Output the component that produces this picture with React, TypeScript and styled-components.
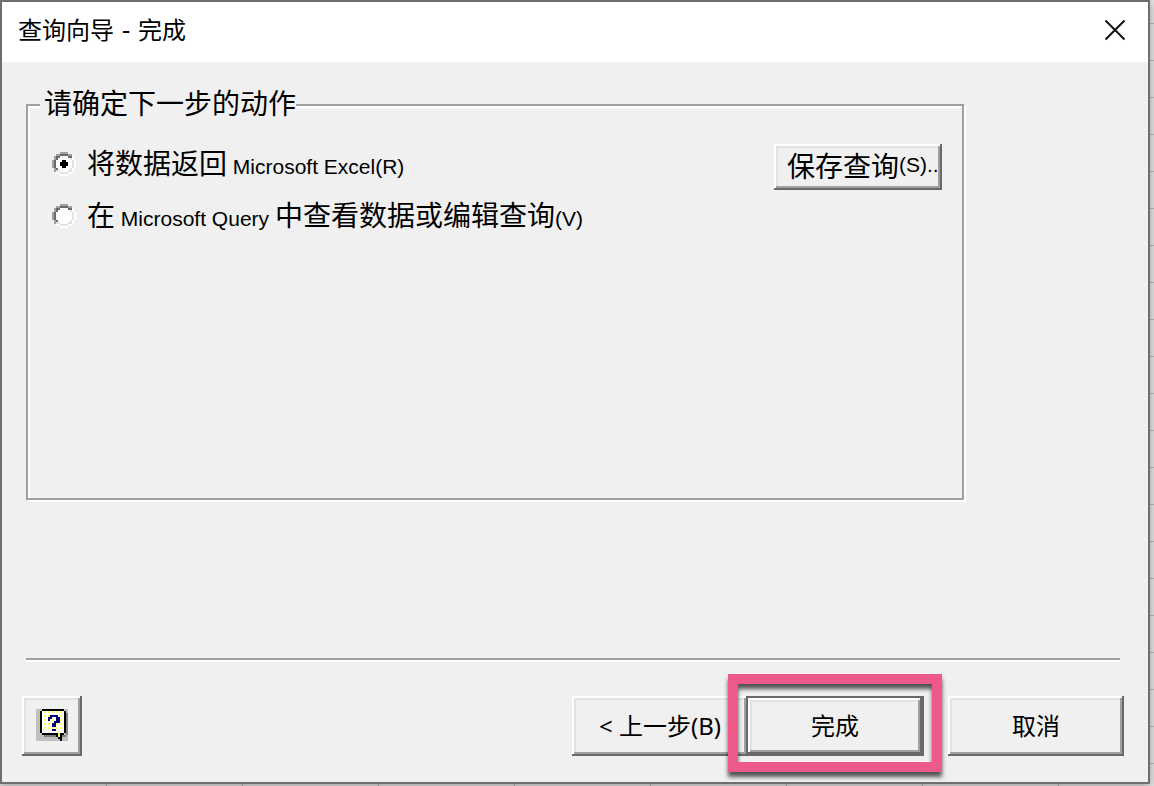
import React from "react";
import styled, { createGlobalStyle } from "styled-components";

const colors = {
  face: "#f0f0f0",
  light: "#e3e3e3",
  highlight: "#ffffff",
  shadow: "#a0a0a0",
  dark: "#696969",
  accent: "#ed5a8a",
};

const GlobalStyle = createGlobalStyle`
  *, *::before, *::after { box-sizing: border-box; }
  body {
    margin: 0;
    font-family: "Noto Sans", "Noto Sans CJK SC", sans-serif;
    font-size: 24px;
    color: #000;
  }
`;

const Sheet = styled.div`
  display: flex;
  min-height: 100vh;
  padding: 0 4px 2px 0;
  background-color: #e2e1e2;
  background-image:
    linear-gradient(#b4b4b4 1px, transparent 1px),
    linear-gradient(90deg, #b4b4b4 1px, transparent 1px);
  background-size: 100% 37px, 136px 100%;
  background-position: 0 23px, 106px 0;
  overflow: hidden;
`;

const Dialog = styled.main`
  display: flex;
  flex: 1;
  flex-direction: column;
  border: 2px solid #6e6e6e;
  background: ${colors.face};
  box-shadow: 0 2px 8px rgba(0, 0, 0, 0.3);
`;

const TitleBar = styled.header`
  display: flex;
  align-items: center;
  justify-content: space-between;
  height: 60px;
  padding: 0 22px 2px 16px;
  background: #fff;
`;

const Title = styled.h1`
  margin: 0;
  font-family: "DejaVu Sans", "Noto Sans CJK SC", sans-serif;
  font-size: 24px;
  line-height: 32px;
  font-weight: 400;
`;

const CloseButton = styled.button`
  display: flex;
  padding: 0 0 2px;
  border: 0;
  background: none;
`;

const Content = styled.form`
  display: flex;
  flex: 1;
  flex-direction: column;
  padding: 27px 0 26px;
`;

const Group = styled.fieldset`
  min-height: 411px;
  margin: 0 184px 0 24px;
  padding: 0;
  border: 2px solid ${colors.shadow};
  box-shadow: 2px 2px ${colors.highlight}, inset 2px 2px ${colors.highlight};
`;

const Legend = styled.legend`
  margin-left: 12px;
  padding: 0 0 0 4px;
  background: ${colors.face};
  font-family: "Liberation Sans", "Noto Sans CJK SC", sans-serif;
  font-size: 28px;
  line-height: 32px;
`;

const GroupBody = styled.div`
  display: flex;
  align-items: flex-start;
  justify-content: space-between;
  padding: 23px 20px 0 24px;
`;

const OptionList = styled.div`
  display: flex;
  flex-direction: column;
  gap: 20px;
  padding-top: 4px;
`;

const Option = styled.label`
  display: flex;
  align-items: center;
  gap: 11px;
  height: 32px;
  font-family: "Liberation Sans", "Noto Sans CJK SC", sans-serif;
  font-size: 28px;
  line-height: 32px;
  white-space: nowrap;
`;

const OptionText = styled.span`
  padding-top: 3px;
`;

const Latin = styled.span`
  font-size: 21px;
`;

const RadioBox = styled.span`
  display: grid;

  > * {
    grid-area: 1 / 1;
    width: 24px;
    height: 24px;
    margin: 0;
  }

  input {
    opacity: 0;
  }

  .dot {
    visibility: hidden;
  }

  input:checked + svg .dot {
    visibility: visible;
  }
`;

const PushButton = styled.button<{ $width: number }>`
  display: flex;
  align-items: center;
  justify-content: center;
  width: ${(p) => p.$width}px;
  height: 60px;
  padding: 0 0 4px;
  border: 0;
  background: ${colors.face};
  color: #000;
  font-family: inherit;
  font-size: 24px;
  white-space: pre;
  box-shadow:
    inset -2px -2px ${colors.dark},
    inset 2px 2px ${colors.highlight},
    inset -4px -4px ${colors.shadow},
    inset 4px 4px ${colors.light};
`;

const HelpButton = styled(PushButton)`
  padding: 0 0 2px;
`;

const SaveButton = styled(PushButton)`
  justify-content: flex-start;
  height: 46px;
  padding: 0 4px 4px 13px;
  font-family: "Liberation Sans", "Noto Sans CJK SC", sans-serif;
  font-size: 28px;
`;

const DefaultButton = styled(PushButton)`
  box-shadow:
    inset 0 0 0 2px ${colors.dark},
    inset -4px -4px ${colors.dark},
    inset 4px 4px ${colors.highlight},
    inset -6px -6px ${colors.shadow},
    inset 6px 6px ${colors.light};
`;

const Divider = styled.hr`
  height: 4px;
  margin: auto 28px 34px 24px;
  border: 0;
  border-top: 2px solid ${colors.shadow};
  background: ${colors.highlight};
`;

const Footer = styled.footer`
  display: flex;
  justify-content: space-between;
  padding: 0 24px 0 20px;
`;

const Actions = styled.div`
  display: flex;
`;

const Highlighted = styled.div`
  position: relative;
  margin: 0 24px 0 -2px;
`;

const HighlightFrame = styled.span`
  position: absolute;
  inset: -22px -18px -16px;
  border: 10px solid ${colors.accent};
  filter: drop-shadow(0 5px 2px rgba(0, 0, 0, 0.65));
  pointer-events: none;
`;

type Run = [x: number, y: number, length: number, height?: number];

function Pixels({ runs, fill, className }: { runs: Run[]; fill: string; className?: string }) {
  return (
    <g fill={fill} className={className}>
      {runs.map(([x, y, w, h = 1]) => (
        <rect key={`${x}-${y}`} x={x} y={y} width={w} height={h} />
      ))}
    </g>
  );
}

function RadioFace() {
  return (
    <svg viewBox="0 0 12 12" shapeRendering="crispEdges" aria-hidden="true">
      <Pixels fill="#fff" runs={[[4, 2, 4, 8], [2, 4, 2, 4], [8, 4, 2, 4], [3, 3, 1, 6], [8, 3, 1, 6]]} />
      <Pixels
        fill={colors.shadow}
        runs={[[4, 0, 4], [2, 1, 2], [8, 1, 2], [1, 2, 1, 2], [0, 4, 1, 4], [1, 8, 1, 2]]}
      />
      <Pixels fill={colors.dark} runs={[[4, 1, 4], [2, 2, 2], [8, 2, 2], [2, 3, 1], [1, 4, 1, 4], [2, 8, 1]]} />
      <Pixels fill={colors.light} runs={[[9, 3, 1], [10, 4, 1, 4], [9, 8, 1], [8, 9, 2], [2, 9, 2], [4, 10, 4]]} />
      <Pixels fill="#fff" runs={[[10, 2, 1, 2], [11, 4, 1, 4], [10, 8, 1, 2], [8, 10, 2], [2, 10, 2], [4, 11, 4]]} />
      <Pixels className="dot" fill="#000" runs={[[5, 4, 2, 4], [4, 5, 4, 2]]} />
    </svg>
  );
}

const yellowDots: Run[] = [2, 4, 6, 8, 10].flatMap((y) =>
  [4, 6, 8, 10, 12].map((x): Run => [x, y - 1, 1]),
);

function HelpIcon() {
  return (
    <svg width="32" height="32" viewBox="0 0 16 16" shapeRendering="crispEdges" aria-hidden="true">
      <rect width="16" height="16" fill="#c0c0c0" />
      <Pixels fill="#808080" runs={[[15, 2, 1, 11], [4, 13, 7], [13, 13, 2]]} />
      <Pixels fill="#fff" runs={[[3, 1, 11, 11]]} />
      <Pixels fill="#ffff4d" runs={[...yellowDots, [11, 12, 1, 2]]} />
      <Pixels
        fill="#000"
        runs={[[3, 0, 11], [2, 1, 1, 11], [14, 1, 1, 11], [3, 12, 8], [12, 12, 2], [10, 13, 1], [12, 13, 1], [11, 14, 2], [12, 15, 1]]}
      />
      <Pixels
        fill="#000080"
        runs={[[7, 3, 4], [6, 4, 2], [10, 4, 2, 2], [6, 5, 1], [9, 6, 3], [8, 7, 2, 2], [8, 10, 2]]}
      />
    </svg>
  );
}

function RadioOption({ children, ...input }: React.InputHTMLAttributes<HTMLInputElement>) {
  return (
    <Option>
      <RadioBox>
        <input type="radio" name="next-step" {...input} />
        <RadioFace />
      </RadioBox>
      <OptionText>{children}</OptionText>
    </Option>
  );
}

export default function App() {
  return (
    <>
      <GlobalStyle />
      <Sheet>
        <Dialog>
          <TitleBar>
            <Title>查询向导 - 完成</Title>
            <CloseButton type="button" aria-label="关闭">
              <svg width="22" height="22" viewBox="0 0 22 22" stroke="#111" strokeWidth="2" aria-hidden="true">
                <path d="M1.5 1.5l19 19M20.5 1.5l-19 19" />
              </svg>
            </CloseButton>
          </TitleBar>
          <Content onSubmit={(e) => e.preventDefault()}>
            <Group>
              <Legend>请确定下一步的动作</Legend>
              <GroupBody>
                <OptionList>
                  <RadioOption value="excel" defaultChecked>
                    将数据返回<Latin> Microsoft Excel(R)</Latin>
                  </RadioOption>
                  <RadioOption value="query">
                    在<Latin> Microsoft Query </Latin>中查看数据或编辑查询<Latin>(V)</Latin>
                  </RadioOption>
                </OptionList>
                <SaveButton type="button" $width={168}>
                  保存查询<Latin>(S)..</Latin>
                </SaveButton>
              </GroupBody>
            </Group>
            <Divider />
            <Footer>
              <HelpButton type="button" $width={60} aria-label="帮助">
                <HelpIcon />
              </HelpButton>
              <Actions>
                <PushButton type="button" $width={176}>{"< 上一步(B)"}</PushButton>
                <Highlighted>
                  <DefaultButton type="submit" $width={178}>完成</DefaultButton>
                  <HighlightFrame />
                </Highlighted>
                <PushButton type="button" $width={176}>取消</PushButton>
              </Actions>
            </Footer>
          </Content>
        </Dialog>
      </Sheet>
    </>
  );
}
